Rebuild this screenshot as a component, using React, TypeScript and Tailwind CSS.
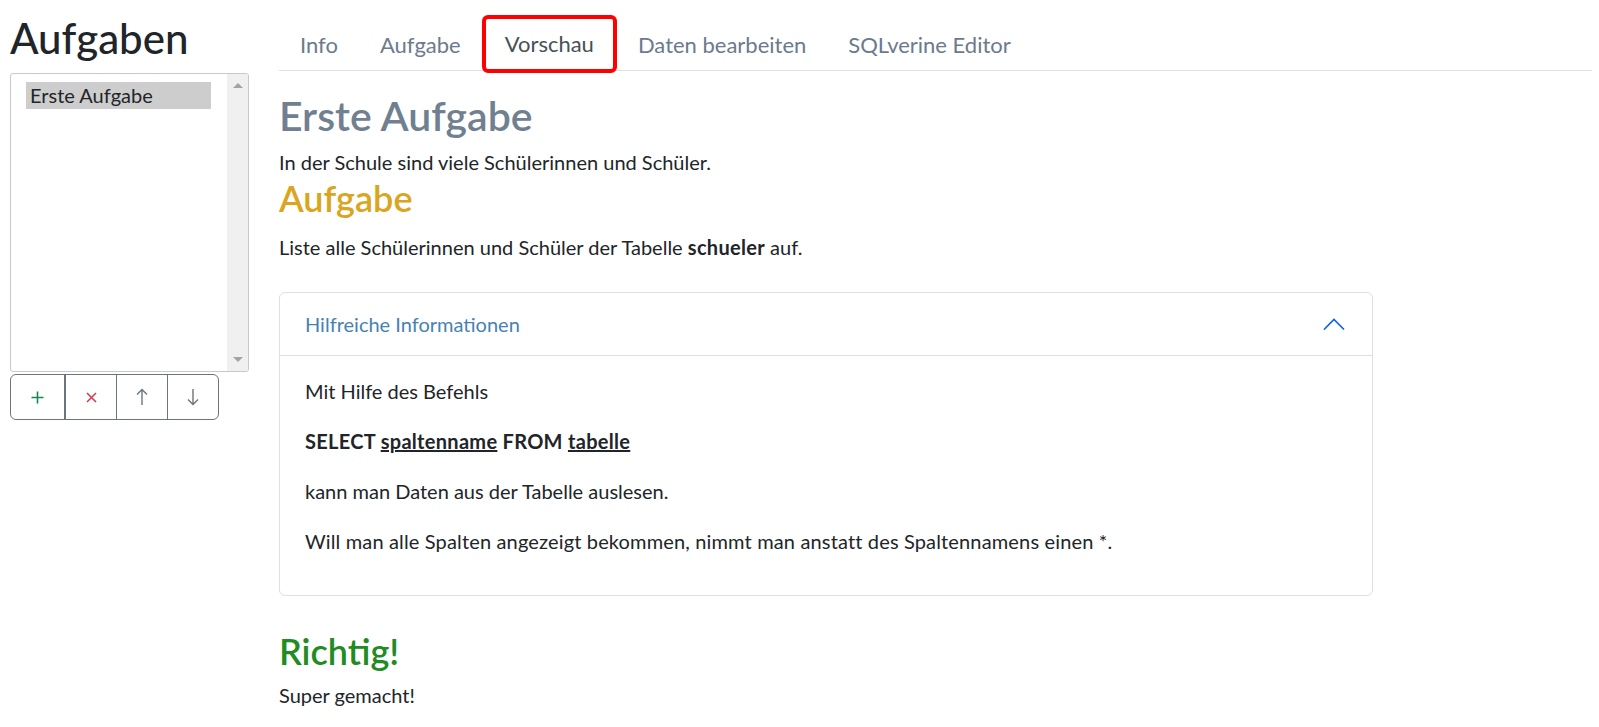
import React from "react";

function ChevronUp() {
  return (
    <svg width="22" height="12" viewBox="0 0 22 12" fill="none">
      <path d="M1 11.5 L11 1.5 L21 11.5" stroke="#0c63e4" strokeWidth="1.6" />
    </svg>
  );
}

export default function App() {
  const tabs = ["Info", "Aufgabe", "Vorschau", "Daten bearbeiten", "SQLverine Editor"];
  return (
    <div className="flex min-h-[727px] w-full bg-white text-[#212529] [font-family:Lato,'Noto_Sans',sans-serif]">
      <aside className="w-[279px] shrink-0 pl-[10px] pt-[14px]">
        <h1 className="text-[42px] font-medium leading-[48px] text-[#212529] mb-[11px]">Aufgaben</h1>
        <div className="flex w-[239px] h-[299px] border border-[#c8c8cf] rounded-[3px] overflow-hidden">
          <div className="flex-1 pl-[15px] pt-[8px]">
            <div className="w-[185px] h-[27px] bg-[#cdcdcd] pl-[4px] text-[20px] leading-[27px] text-[#212529]">
              Erste Aufgabe
            </div>
          </div>
          <div className="w-[21px] bg-[#f0f0f0] flex flex-col items-center justify-between py-[9px]">
            <div className="w-0 h-0 border-l-[5px] border-r-[5px] border-b-[5px] border-l-transparent border-r-transparent border-b-[#a3a3a3]" />
            <div className="w-0 h-0 border-l-[5px] border-r-[5px] border-t-[5px] border-l-transparent border-r-transparent border-t-[#a3a3a3]" />
          </div>
        </div>
        <div className="mt-[2px] flex w-[209px] h-[46px] border border-[#6c757d] rounded-[6px] overflow-hidden">
          <button className="w-[55px] flex items-center justify-center border-r-2 border-[#6c757d]">
            <svg width="13" height="13" viewBox="0 0 13 13"><path d="M6.5 0.5V12.5M0.5 6.5H12.5" stroke="#198754" strokeWidth="1.6" /></svg>
          </button>
          <button className="w-[51px] flex items-center justify-center border-r border-[#6c757d]">
            <svg width="11" height="11" viewBox="0 0 11 11"><path d="M1 1L10 10M10 1L1 10" stroke="#dc3545" strokeWidth="1.5" /></svg>
          </button>
          <button className="w-[51px] flex items-center justify-center border-r border-[#6c757d]">
            <svg width="12" height="18" viewBox="0 0 12 18"><path d="M6 17V1.5M1 6.5L6 1.5L11 6.5" stroke="#6c757d" strokeWidth="1.4" fill="none" /></svg>
          </button>
          <button className="flex-1 flex items-center justify-center">
            <svg width="12" height="18" viewBox="0 0 12 18"><path d="M6 1V16.5M1 11.5L6 16.5L11 11.5" stroke="#6c757d" strokeWidth="1.4" fill="none" /></svg>
          </button>
        </div>
      </aside>

      <main className="flex-1 min-w-0 pr-[7px]">
        <nav className="mt-[19px] flex items-start border-b border-[#dee2e6]">
          {tabs.map((t) =>
            t === "Vorschau" ? (
              <div
                key={t}
                className="-mt-1 -mb-[3px] px-[19px] py-[10px] text-[22px] leading-[30px] border-4 border-[#ff0000] rounded-[6px] bg-white text-[#495057]"
              >
                {t}
              </div>
            ) : (
              <div
                key={t}
                className="-mb-px px-5 py-[10px] text-[22px] leading-[30px] border border-transparent text-[#6c7a8c]"
              >
                {t}
              </div>
            )
          )}
        </nav>

        <div className="w-[1094px] text-[20px] leading-[30px]">
          <h1 className="mt-[21px] text-[41px] font-semibold leading-[48px] text-[#708090]">Erste Aufgabe</h1>
          <p className="mt-[7px]">In der Schule sind viele Schülerinnen und Schüler.</p>
          <h2 className="text-[36px] font-semibold leading-[42px] text-[#daa520]">Aufgabe</h2>
          <p className="mt-[13px]">
            Liste alle Schülerinnen und Schüler der Tabelle <b className="tracking-[0.3px]">schueler</b> auf.
          </p>

          <div className="mt-[30px] border border-[#dfdfdf] rounded-[6px]">
            <div className="h-[63px] flex items-center justify-between pl-[25px] pr-[27px] border-b border-[#dfdfdf]">
              <span className="text-[#4682b4]">Hilfreiche Informationen</span>
              <ChevronUp />
            </div>
            <div className="pt-[20px] pb-[19px] px-[25px]">
              <p className="mb-[20px]">Mit Hilfe des Befehls</p>
              <p className="mb-[20px] font-bold tracking-[0.3px]">
                SELECT <u>spaltenname</u> FROM <u>tabelle</u>
              </p>
              <p className="mb-[20px]">kann man Daten aus der Tabelle auslesen.</p>
              <p className="mb-[20px] tracking-[0.15px]">Will man alle Spalten angezeigt bekommen, nimmt man anstatt des Spaltennamens einen *.</p>
            </div>
          </div>

          <h2 className="mt-[34px] text-[36px] font-semibold leading-[42px] text-[#228b22]">Richtig!</h2>
          <p className="mt-[8px]">Super gemacht!</p>
        </div>
      </main>
    </div>
  );
}
